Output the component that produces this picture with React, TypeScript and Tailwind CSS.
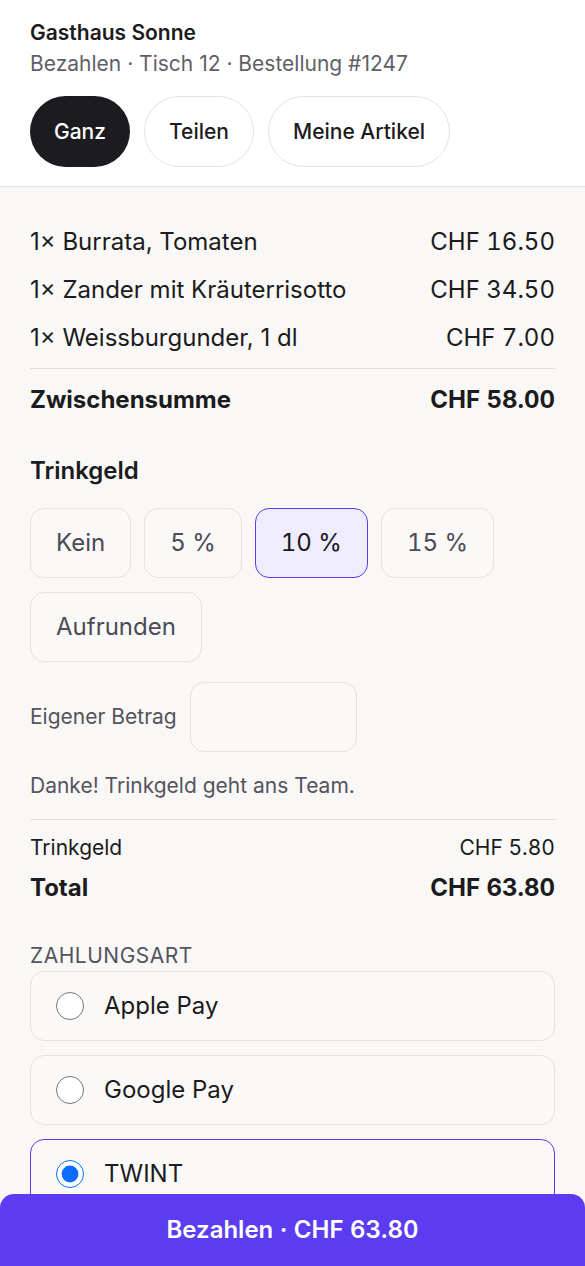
import { useState } from 'react';

const items = [
    { name: '1× Burrata, Tomaten', price: 'CHF 16.50' },
    { name: '1× Zander mit Kräuterrisotto', price: 'CHF 34.50' },
    { name: '1× Weissburgunder, 1 dl', price: 'CHF 7.00' },
];

const tips = ['Kein', '5 %', '10 %', '15 %', 'Aufrunden'];
const methods = ['Apple Pay', 'Google Pay', 'TWINT'];

export default function App() {
    const [mode, setMode] = useState('Ganz');
    const [tip, setTip] = useState('10 %');
    const [method, setMethod] = useState('TWINT');

    return (
        <div className="min-h-screen bg-[#f9f8f6] pb-[90px] text-[#1b1b20]" style={{ fontFamily: 'Inter, "Noto Sans", sans-serif' }}>
            <header className="bg-white border-b border-[#e4e2de] px-[30px] pt-[20px] pb-[19px]">
                <h1 className="text-[21px] leading-[26px] font-semibold">Gasthaus Sonne</h1>
                <p className="mt-[4px] text-[21px] leading-[28px] text-[#605f68]">Bezahlen · Tisch 12 · Bestellung #1247</p>
                <div className="mt-[18px] flex gap-[14px]">
                    {['Ganz', 'Teilen', 'Meine Artikel'].map((m) => (
                        <button
                            key={m}
                            onClick={() => setMode(m)}
                            className={`h-[71px] rounded-full px-[24px] text-[21px] font-medium ${
                                mode === m ? 'bg-[#1c1b20] text-white' : 'bg-white text-[#1b1b20] border border-[#e4e2de]'
                            }`}
                        >
                            {m}
                        </button>
                    ))}
                </div>
            </header>

            <main className="px-[30px] pt-[31px]">
                <ul>
                    {items.map((it) => (
                        <li key={it.name} className="flex h-[48px] items-center justify-between text-[24px]">
                            <span>{it.name}</span>
                            <span className="tabular-nums">{it.price}</span>
                        </li>
                    ))}
                </ul>
                <div className="mt-[6px] border-t border-[#e2e0dc] pt-[7px]">
                    <div className="flex h-[48px] items-center justify-between text-[24px] font-bold">
                        <span>Zwischensumme</span>
                        <span className="tabular-nums">CHF 58.00</span>
                    </div>
                </div>

                <h2 className="mt-[32px] text-[24px] leading-[30px] font-semibold">Trinkgeld</h2>
                <div className="mt-[22px] flex flex-wrap gap-x-[13px] gap-y-[14px]">
                    {tips.map((t) => (
                        <button
                            key={t}
                            onClick={() => setTip(t)}
                            className={`h-[70px] rounded-[14px] border px-[25px] text-[24px] tabular-nums ${
                                tip === t
                                    ? 'border-[#5b3ce4] bg-[#efecfe] text-[#18181c]'
                                    : 'border-[#e5e3df] bg-[#faf9f7] text-[#4b4a55]'
                            }`}
                        >
                            {t}
                        </button>
                    ))}
                </div>

                <div className="mt-[20px] flex items-center gap-[13px]">
                    <label className="text-[21px] text-[#55545d]">Eigener Betrag</label>
                    <input className="h-[70px] w-[167px] rounded-[14px] border border-[#e5e3df] bg-[#faf9f7] px-3 text-[20px] outline-none" />
                </div>

                <p className="mt-[22px] text-[21px] leading-[24px] text-[#55545d]">Danke! Trinkgeld geht ans Team.</p>

                <div className="mt-[21px] border-t border-[#e2e0dc] pt-[16px]">
                    <div className="flex justify-between text-[21px] leading-[24px]">
                        <span>Trinkgeld</span>
                        <span className="tabular-nums">CHF 5.80</span>
                    </div>
                    <div className="mt-[13px] flex justify-between text-[24px] leading-[30px] font-bold">
                        <span>Total</span>
                        <span className="tabular-nums">CHF 63.80</span>
                    </div>
                </div>

                <h3 className="mt-[41px] text-[21px] leading-[24px] uppercase tracking-[0.5px] text-[#55545d]">Zahlungsart</h3>
                <div className="mt-[3px] flex flex-col gap-[14px]">
                    {methods.map((m) => (
                        <label
                            key={m}
                            className={`flex h-[70px] items-center gap-[20px] rounded-[14px] border bg-[#faf9f7] pl-[25px] text-[24px] ${
                                method === m ? 'border-[#5b3ce4]' : 'border-[#e5e3df]'
                            }`}
                        >
                            <input
                                type="radio"
                                name="pay"
                                checked={method === m}
                                onChange={() => setMethod(m)}
                                className="h-[28px] w-[28px] m-0 accent-[#0b6cff]"
                            />
                            <span>{m}</span>
                        </label>
                    ))}
                </div>
            </main>

            <button className="fixed bottom-0 left-0 right-0 h-[72px] rounded-t-[14px] bg-[#5b3cf0] text-[24px] font-semibold text-white tabular-nums">
                Bezahlen · CHF 63.80
            </button>
        </div>
    );
}
